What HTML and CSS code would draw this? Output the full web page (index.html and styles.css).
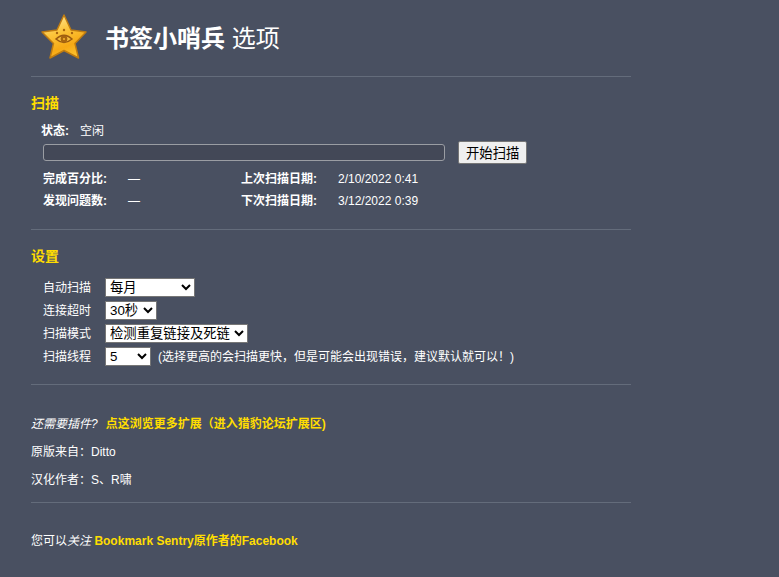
FILE: index.html
```html
<!DOCTYPE html>
<html lang="zh">
<head>
<meta charset="utf-8">
<title>书签小哨兵 选项</title>
<link rel="stylesheet" href="styles.css">
</head>
<body>
<div class="page">
  <header class="head">
    <svg class="logo" width="48" height="48" viewBox="0 0 48 48">
      <defs>
        <linearGradient id="g" x1="0.2" y1="0" x2="0.6" y2="1">
          <stop offset="0" stop-color="#ffe9a0"/>
          <stop offset="0.4" stop-color="#fcc53c"/>
          <stop offset="0.75" stop-color="#f7a914"/>
          <stop offset="1" stop-color="#fbc02d"/>
        </linearGradient>
      </defs>
      <path d="M24 2 L31 17 L46 19 L35 30.500 L38.500 45 L24 37.500 L10 45 L13.500 30.500 L2 19 L17 17 Z" fill="url(#g)" stroke="#c07c10" stroke-width="1.500" stroke-linejoin="round"/>
      <path d="M16 26 Q24 18.500 32 26 Q24 33 16 26 Z" fill="#f8c040" stroke="#9a5a10" stroke-width="1.500"/>
      <circle cx="24" cy="26" r="3.400" fill="#a8650f"/>
      <circle cx="24" cy="26" r="1.100" fill="#f5b32a"/>
      <circle cx="24" cy="17" r="1.200" fill="#a8650f"/>
      <circle cx="17" cy="20" r="1.200" fill="#a8650f"/>
      <circle cx="32" cy="20" r="1.200" fill="#a8650f"/>
    </svg>
    <h1 class="title"><strong>书签小哨兵</strong> 选项</h1>
  </header>
  <hr class="rule rule-head">

  <h2 class="section-title">扫描</h2>
  <div class="status"><b>状态:</b><span>空闲</span></div>
  <div class="progress-row">
    <div class="progress"></div>
    <button class="btn" type="button">开始扫描</button>
  </div>
  <div class="stats">
    <b>完成百分比:</b><span>—</span><b>上次扫描日期:</b><span>2/10/2022 0:41</span>
    <b>发现问题数:</b><span>—</span><b>下次扫描日期:</b><span>3/12/2022 0:39</span>
  </div>
  <hr class="rule rule-scan">

  <h2 class="section-title">设置</h2>
  <div class="settings">
    <label>自动扫描</label>
    <div><select class="s-auto"><option>每月</option></select></div>
    <label>连接超时</label>
    <div><select class="s-time"><option>30秒</option></select></div>
    <label>扫描模式</label>
    <div><select class="s-mode"><option>检测重复链接及死链</option></select></div>
    <label>扫描线程</label>
    <div class="thread"><select class="s-thread"><option>5</option></select><span>(选择更高的会扫描更快，但是可能会出现错误，建议默认就可以！)</span></div>
  </div>
  <hr class="rule rule-set">

  <p class="more"><em>还需要插件?</em><a href="#">点这浏览更多扩展（进入猎豹论坛扩展区)</a></p>
  <p class="credit">原版来自：Ditto</p>
  <p class="credit">汉化作者：S、R啸</p>
  <hr class="rule rule-credit">
  <p class="follow">您可以<em>关注</em> <a href="#">Bookmark Sentry原作者的Facebook</a></p>
</div>
</body>
</html>
```
FILE: styles.css
```css
html, body {
  margin: 0;
  padding: 0;
  background: #495061;
}
body {
  color: #fff;
  font: 12px/16px "Liberation Sans", "Noto Sans CJK SC", sans-serif;
}
.page {
  width: 600px;
  margin-left: 31px;
  padding-bottom: 19px;
}
.head {
  display: flex;
  align-items: center;
  height: 76px;
}
.logo {
  margin: 0 17px 2px 9px;
  flex: none;
}
.title {
  margin: 2px 0 0;
  font-size: 24px;
  line-height: 30px;
  font-weight: 400;
}
.title strong { font-weight: 700; }
.rule {
  height: 1px;
  margin: 0;
  border: 0;
  background: #646c7b;
}
.section-title {
  margin: 18px 0 0;
  font-size: 14px;
  line-height: 16px;
  font-weight: 700;
  color: #ffdd00;
}
.status {
  display: flex;
  gap: 11px;
  margin: 12px 0 0 10px;
}
.progress-row {
  display: flex;
  align-items: center;
  margin: 2px 0 0 12px;
}
.progress {
  width: 400px;
  height: 15px;
  border: 1px solid #9a9da3;
  border-radius: 3px;
  background: #434857;
}
.btn {
  height: 23px;
  margin-left: 13px;
  padding: 0 7px;
  font: 13.33px "Liberation Sans", "Noto Sans CJK SC", sans-serif;
  color: #000;
  background: #efefef;
  border: 1px solid #767676;
  border-radius: 2px;
}
.stats {
  display: grid;
  grid-template-columns: 85px 113px 97px auto;
  grid-auto-rows: 22px;
  align-items: center;
  margin: 4px 0 0 12px;
}
.rule-scan { margin-top: 17px; }
.settings {
  display: grid;
  grid-template-columns: 62px auto;
  grid-auto-rows: 23px;
  align-items: center;
  margin: 12px 0 0 12px;
}
.settings select {
  height: 19px;
  font: 13.33px "Liberation Sans", "Noto Sans CJK SC", sans-serif;
  color: #000;
  background: #fff;
  border: 1px solid #767676;
  border-radius: 0;
  padding: 0;
}
.settings label { padding-top: 1px; }
.s-auto { width: 90px; }
.s-time { width: 52px; }
.s-mode { width: 143px; }
.s-thread { width: 46px; }
.thread {
  display: flex;
  align-items: center;
  gap: 7px;
}
.rule-set { margin-top: 16px; }
p { margin: 0; }
a {
  color: #ffdd00;
  font-weight: 700;
  text-decoration: none;
}
.more { margin-top: 31px; }
.more em { margin-right: 8px; }
.credit { margin-top: 12px; }
.rule-credit { margin-top: 14px; }
.follow { margin-top: 30px; }
```
